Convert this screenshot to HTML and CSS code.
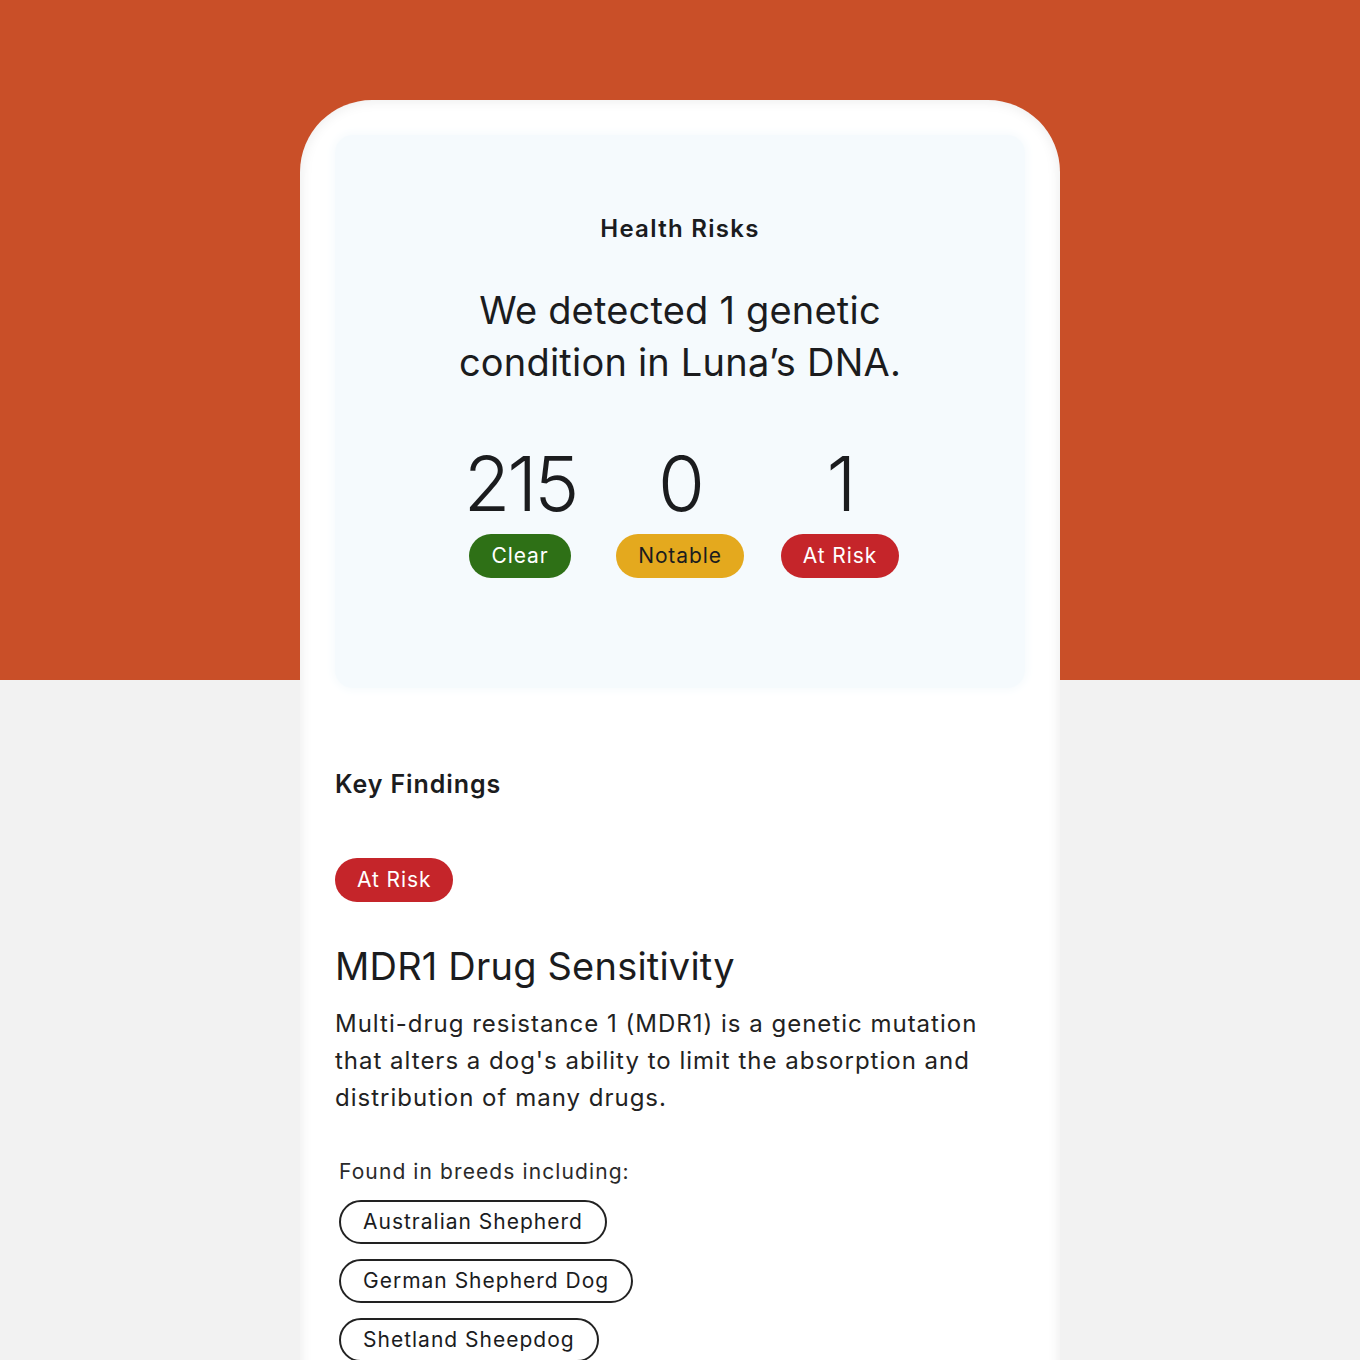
FILE: index.html
```html
<!DOCTYPE html>
<html lang="en">
<head>
  <meta charset="UTF-8" />
  <title>Health Risks</title>
  <link rel="stylesheet" href="styles.css">
</head>
<body>
  <div class="phone">
    <div class="summary">
      <div class="summary-title">Health Risks</div>
      <div class="headline">We detected 1 genetic<br>condition in Luna’s DNA.</div>

      <div class="stats">
        <div class="stat">
          <div class="stat-num">215</div>
          <span class="pill clear">Clear</span>
        </div>
        <div class="stat">
          <div class="stat-num">0</div>
          <span class="pill notable">Notable</span>
        </div>
        <div class="stat">
          <div class="stat-num">1</div>
          <span class="pill risk">At Risk</span>
        </div>
      </div>
    </div>

    <div class="findings">
      <div class="section-title">Key Findings</div>
      <span class="pill risk">At Risk</span>
      <h2 class="finding-name">MDR1 Drug Sensitivity</h2>
      <p class="finding-text">Multi-drug resistance 1 (MDR1) is a genetic mutation that alters a dog's ability to limit the absorption and distribution of many drugs.</p>

      <div class="breeds">
        <div class="breeds-label">Found in breeds including:</div>
        <span class="breed">Australian Shepherd</span>
        <span class="breed">German Shepherd Dog</span>
        <span class="breed">Shetland Sheepdog</span>
      </div>
    </div>
  </div>
</body>
</html>
```

FILE: styles.css
```css
* { box-sizing: border-box; }

html, body {
  height: 100%;
}

body {
  margin: 0;
  font-family: Inter, "Noto Sans", sans-serif;
  color: #1b1c1e;
  background: linear-gradient(to bottom, #c94f28 0, #c94f28 680px, #f2f2f2 680px);
  overflow: hidden;
}

.phone {
  width: 760px;
  height: 1400px;
  margin: 100px auto 0;
  padding: 35px 35px 0;
  background: #fff;
  border-radius: 72px 72px 0 0;
  box-shadow: inset 0 0 14px rgba(0, 0, 0, 0.09);
}

/* summary panel */
.summary {
  background: #f5fafd;
  border-radius: 18px;
  box-shadow: 0 0 8px 3px #f7fbfd;
  padding: 79px 0 110px;
  text-align: center;
}

.summary-title {
  font-size: 24px;
  line-height: 29px;
  font-weight: 600;
  letter-spacing: 1.3px;
}

.headline {
  margin-top: 41px;
  font-size: 38px;
  line-height: 52px;
  font-weight: 400;
  letter-spacing: 0.2px;
}

.stats {
  display: grid;
  grid-template-columns: repeat(3, 160px);
  justify-content: center;
  margin-top: 57px;
}

.stat {
  display: flex;
  flex-direction: column;
  align-items: center;
}

.stat-num {
  font-size: 76px;
  line-height: 76px;
  font-weight: 300;
  letter-spacing: -3px;
  margin-bottom: 13px;
}

.pill {
  display: inline-block;
  height: 44px;
  line-height: 44px;
  padding: 0 22px;
  border-radius: 22px;
  font-size: 21px;
  letter-spacing: 0.9px;
}

.pill.clear { background: #2e7016; color: #fff; }
.pill.notable { background: #e4a91e; color: #1b1c1e; }
.pill.risk { background: #c5252a; color: #fff; }

/* key findings */
.findings {
  padding-top: 81px;
}

.section-title {
  font-size: 25px;
  line-height: 30px;
  font-weight: 600;
  letter-spacing: 0.9px;
  margin-bottom: 59px;
}

.finding-name {
  margin: 41px 0 0;
  font-size: 38px;
  line-height: 46px;
  font-weight: 400;
  letter-spacing: 0.2px;
}

.finding-text {
  margin: 16px 0 0;
  font-size: 24px;
  line-height: 37px;
  letter-spacing: 1px;
  color: #222;
  max-width: 670px;
}

.breeds {
  margin: 43px 0 0 4px;
  display: flex;
  flex-direction: column;
  align-items: flex-start;
  gap: 15px;
}

.breeds-label {
  font-size: 21px;
  line-height: 26px;
  letter-spacing: 1.1px;
  color: #2a2a2a;
}

.breed {
  height: 44px;
  line-height: 40px;
  padding: 0 22px;
  border: 2px solid #222;
  border-radius: 22px;
  font-size: 21px;
  letter-spacing: 1px;
}
```
